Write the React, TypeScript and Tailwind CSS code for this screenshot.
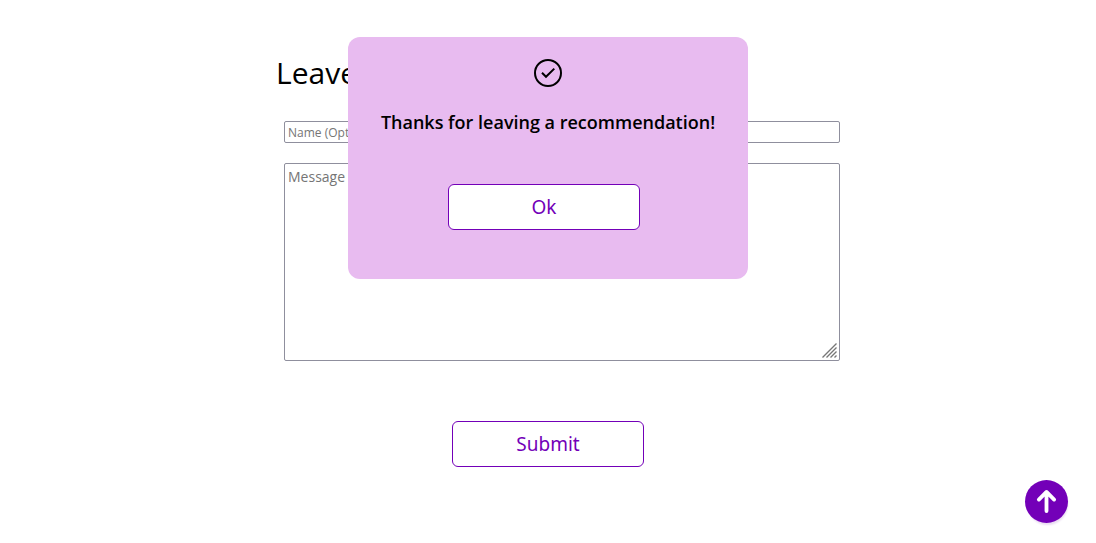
import React, { useState } from "react";

const outlineButton =
  "h-[46px] w-48 rounded-md border border-[#7300b8] bg-white font-['Noto_Sans',sans-serif] text-[19px] leading-7 text-[#7300b8]";

function ConfirmationDialog({ onClose }: { onClose: () => void }) {
  return (
    <div
      role="dialog"
      aria-labelledby="dialog-title"
      className="absolute inset-x-0 top-[37px] mx-auto flex h-[242px] w-[400px] flex-col items-center rounded-xl bg-[#e8bbf0] pt-[22px]"
    >
      <svg width="28" height="28" viewBox="0 0 28 28" fill="none" stroke="#000" strokeWidth="2" aria-hidden="true">
        <circle cx="14" cy="14" r="13" />
        <path d="M8 13.8l4 4 8.3-8.2" />
      </svg>
      <h2 id="dialog-title" className="mt-[21px] text-lg font-semibold leading-7 whitespace-nowrap">
        Thanks for leaving a recommendation!
      </h2>
      <div className="mt-12 pr-2">
        <button type="button" onClick={onClose} className={outlineButton}>
          Ok
        </button>
      </div>
    </div>
  );
}

export default function App() {
  const [open, setOpen] = useState(true);

  return (
    <div className="relative min-h-screen bg-white font-['Open_Sans','Noto_Sans',sans-serif] text-black">
      <main className="mx-auto max-w-[544px] pt-[53px]">
        <h1 className="text-3xl leading-10">Leave a Recommendation</h1>
        <form
          className="mt-7 flex flex-col items-center"
          onSubmit={(event) => {
            event.preventDefault();
            setOpen(true);
          }}
        >
          <div className="ml-7 flex w-[556px] max-w-full flex-col gap-5 sm:max-w-none">
            <input
              type="text"
              aria-label="Name"
              placeholder="Name (Optional)"
              className="h-[22px] rounded-xs border border-[#8f8f9d] bg-white px-[3px] text-xs placeholder:text-[#757575]"
            />
            <div className="relative flex">
              <textarea
                aria-label="Message"
                placeholder="Message"
                className="h-[198px] w-full resize-none rounded-xs border border-[#8f8f9d] bg-white px-[3px] py-[3px] text-sm placeholder:text-[#757575]"
              />
              <svg
                className="pointer-events-none absolute right-[3px] bottom-[3px]"
                width="15"
                height="15"
                viewBox="0 0 15 15"
                stroke="#777"
                strokeWidth="1.4"
                aria-hidden="true"
              >
                <path d="M0.5 14.5L14.5 0.5M4.5 14.5L14.5 4.5M8.5 14.5L14.5 8.5M12.5 14.5L14.5 12.5" />
              </svg>
            </div>
          </div>
          <button type="submit" className={`mt-[60px] ${outlineButton}`}>
            Submit
          </button>
        </form>
      </main>
      {open && <ConfirmationDialog onClose={() => setOpen(false)} />}
      <a
        href="#"
        aria-label="Back to top"
        className="fixed right-7 bottom-5 flex size-[43px] items-center justify-center rounded-full bg-[#7300b8] shadow-[1px_3px_2px_-1px_#eadcf2]"
      >
        <svg width="21" height="25" viewBox="0 0 22 26" fill="none" stroke="#fff" strokeWidth="4" strokeLinecap="round" strokeLinejoin="round" aria-hidden="true">
          <path d="M11 23V3M3 11l8-8 8 8" />
        </svg>
      </a>
    </div>
  );
}
